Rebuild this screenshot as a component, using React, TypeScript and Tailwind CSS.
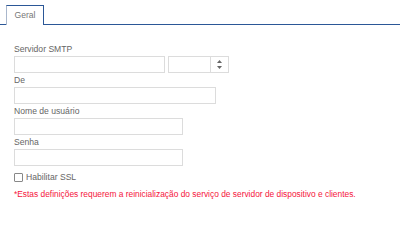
import React from 'react';

const FONT = { fontFamily: '"Liberation Sans", Arial, sans-serif' };

function Field({ label, width, children }: { label: string; width?: string; children?: React.ReactNode }) {
  return (
    <div className="flex flex-col">
      <label className="text-[8.6px] leading-[12px] text-[#666] mb-[1px]">{label}</label>
      {children ?? <input className={`h-[17px] ${width} border border-[#dcdcdc] bg-white outline-none`} />}
    </div>
  );
}

export default function App() {
  return (
    <div className="w-[400px] h-[212px] bg-white overflow-hidden" style={FONT}>
      {/* Tab bar */}
      <div className="flex pt-[5px] pl-[6px] border-b border-[#2b5797]">
        <div className="h-[20px] w-[38px] -mb-px bg-white border-t border-r border-[#2b5797] border-l border-l-[#a9b7cc] flex items-center justify-center text-[8.6px] text-[#777]">
          Geral
        </div>
      </div>

      <div className="pl-[14px] pt-[18px] flex flex-col gap-[1px]">
        <Field label="Servidor SMTP">
          <div className="flex gap-[3px]">
            <input className="h-[17px] w-[151px] border border-[#dcdcdc] bg-white outline-none" />
            <div className="h-[17px] w-[61px] border border-[#dcdcdc] flex">
              <input className="flex-1 min-w-0 outline-none" />
              <div className="w-[18px] border-l border-[#dcdcdc] flex flex-col items-center justify-center gap-[3px]">
                <svg width="5" height="3" viewBox="0 0 5 3"><path d="M2.5 0 L5 3 L0 3 Z" fill="#666" /></svg>
                <svg width="5" height="3" viewBox="0 0 5 3"><path d="M0 0 L5 0 L2.5 3 Z" fill="#666" /></svg>
              </div>
            </div>
          </div>
        </Field>
        <Field label="De" width="w-[202px]" />
        <Field label="Nome de usuário" width="w-[169px]" />
        <Field label="Senha" width="w-[169px]" />
        <label className="flex items-center gap-[3px] mt-[4px] text-[8.6px] leading-[12px] text-[#666]">
          <span className="w-[9px] h-[9px] border border-[#888] rounded-[1px] bg-white inline-block" />
          Habilitar SSL
        </label>
        <p className="mt-[4px] text-[8.4px] leading-[12px] text-[#f5143c]">
          *Estas definições requerem a reinicialização do serviço de servidor de dispositivo e clientes.
        </p>
      </div>
    </div>
  );
}
